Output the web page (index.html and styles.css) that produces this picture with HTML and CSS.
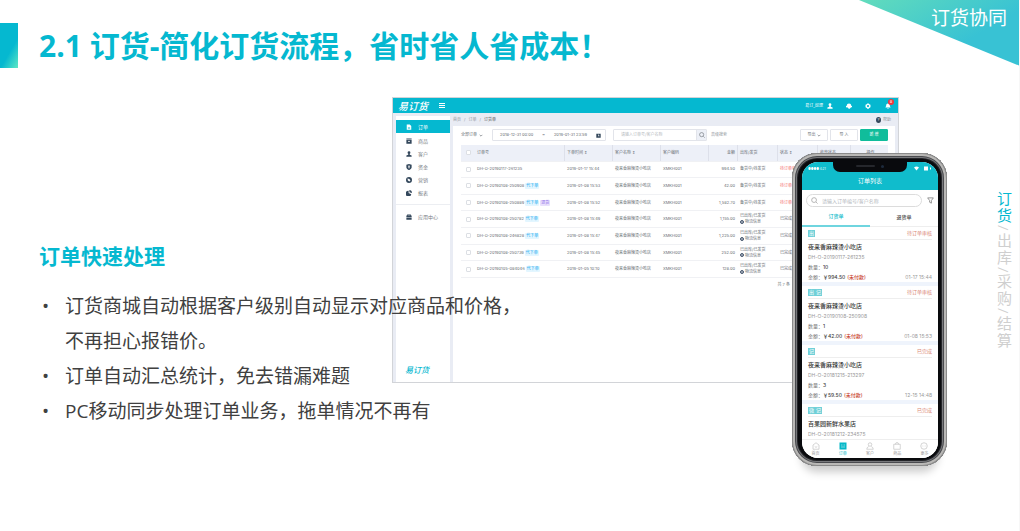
FILE: index.html
```html
<!DOCTYPE html>
<html lang="zh-CN">
<head>
<meta charset="utf-8">
<meta name="viewport" content="width=device-width, initial-scale=1">
<title>订货协同</title>
<link rel="stylesheet" href="styles.css">
</head>
<body>
<svg class="sprite" aria-hidden="true">
  <symbol id="i-user" viewBox="0 0 16 16"><circle cx="8" cy="4.5" r="3.7"/><path d="M6 7h4v3l5 2v3H1v-3l5-2z"/></symbol>
  <symbol id="i-gear" viewBox="0 0 16 16"><path fill-rule="evenodd" d="M6 1h4l1 2 3 1 1 4-1 4-3 1-1 2H6l-1-2-3-1-1-4 1-4 3-1zM8 5a3 3 0 1 0 0 6 3 3 0 0 0 0-6z"/></symbol>
  <symbol id="i-doc" viewBox="0 0 16 16"><path fill-rule="evenodd" d="M2 1h8l4 4v10H2zM5 9v1.500h6V9zM5 12v1h6v-1z"/></symbol>
  <symbol id="i-box" viewBox="0 0 16 16"><path fill-rule="evenodd" d="M1 1h14v3H1zM1 5h14v10H1zM5 7c0 5 6 5 6 0H9.500c0 2.500-3 2.500-3 0z"/></symbol>
  <symbol id="i-shield" viewBox="0 0 16 16"><path fill-rule="evenodd" d="M8 0l7 2v7c0 3-4 6-7 7-3-1-7-4-7-7V2zM5 4l2 3H5v1.500h2V12h2V8.500h2V7H9l2-3H9.500L8 6 6.500 4z"/></symbol>
  <symbol id="i-tag" viewBox="0 0 16 16"><path fill-rule="evenodd" d="M8 0a8 8 0 1 0 0 16A8 8 0 0 0 8 0zM4 4l5 1 3 4-3 3-4-3z"/></symbol>
  <symbol id="i-pie" viewBox="0 0 16 16"><path d="M7 2v6l7 3A7.500 7.500 0 1 1 7 2z"/><path d="M9 0c4 0 7 3 7 8L9 6z"/></symbol>
  <symbol id="i-case" viewBox="0 0 16 16"><path fill-rule="evenodd" d="M3 1h10v3h2v4H1V4h2zM1 9h14v6H1zM5 3v1h6V3z"/></symbol>
  <symbol id="i-search" viewBox="0 0 16 16"><path fill="none" stroke="currentColor" stroke-width="1.600" d="M11.500 11.500L15 15M7 1.500a5.500 5.500 0 1 0 0 11 5.500 5.500 0 0 0 0-11z"/></symbol>
</svg>

<div class="slide">
  <header class="slide-head">
    <span class="accent"></span>
    <h1 class="title">2.1 订货-简化订货流程，省时省人省成本！</h1>
    <div class="corner">订货协同</div>
  </header>

  <main class="stage">
    <section class="copy">
      <h2>订单快速处理</h2>
      <ul>
        <li>订货商城自动根据客户级别自动显示对应商品和价格，<br>不再担心报错价。</li>
        <li>订单自动汇总统计，免去错漏难题</li>
        <li>PC移动同步处理订单业务，拖单情况不再有</li>
      </ul>
    </section>

    <section class="demo">
      <div class="desk">
        <div class="desk-bar">
          <b class="logo">易订货</b>
          <svg class="burger" viewBox="0 0 6 5"><path d="M0 .5h6M0 2.500h6M0 4.500h6"/></svg>
          <span class="who">易订_经理</span>
          <svg class="ic"><use href="#i-user"/></svg>
          <svg class="ic gap" viewBox="0 0 16 16"><path d="M2 7a6 6 0 0 1 12 0l2 1v3h-3v1l-3 3H7l-2-3H3l-3-1V8z"/></svg>
          <svg class="ic gap"><use href="#i-gear"/></svg>
          <span class="bell"><svg class="ic" viewBox="0 0 16 16"><path d="M8 1c4 0 5 3 5 7l2 4H1l2-4c0-4 1-7 5-7zM6 13h4l-2 3z"/></svg><i>8</i></span>
        </div>
        <div class="desk-body">
          <nav class="side">
            <a class="on" href="#"><svg class="ic"><use href="#i-doc"/></svg>订单</a>
            <a href="#"><svg class="ic"><use href="#i-box"/></svg>商品</a>
            <a href="#"><svg class="ic"><use href="#i-user"/></svg>客户</a>
            <a href="#"><svg class="ic"><use href="#i-shield"/></svg>资金</a>
            <a href="#"><svg class="ic"><use href="#i-tag"/></svg>营销</a>
            <a href="#"><svg class="ic"><use href="#i-pie"/></svg>报表</a>
            <hr>
            <a href="#"><svg class="ic"><use href="#i-case"/></svg>应用中心</a>
            <b class="logo small">易订货</b>
          </nav>
          <div class="work">
            <div class="crumbs"><span>首页</span><span>/</span><span>订单</span><span>/</span><span class="here">订货单</span><span class="help"><i>?</i>帮助</span></div>
            <div class="panel">
              <div class="tools">
                <button class="plain">全部订单 <svg class="chev" viewBox="0 0 6 4"><path d="M1 1l2 2 2-2"/></svg></button>
                <div class="dates"><span>2018-12-31 00:00</span><span>~</span><span>2019-01-31 23:59</span><svg viewBox="0 0 16 16"><path fill-rule="evenodd" d="M1 2h14v13H1zM7 5v5h4V8H9V5z"/></svg></div>
                <div class="find"><input aria-label="搜索订单" placeholder="请输入订单号/客户名称"><button aria-label="搜索"><svg><use href="#i-search"/></svg></button></div>
                <a class="adv" href="#">高级搜索</a>
                <button class="btn first">导出 <svg class="chev" viewBox="0 0 6 4"><path d="M1 1l2 2 2-2"/></svg></button>
                <button class="btn">导 入</button>
                <button class="btn add">新 增</button>
              </div>
              <table>
                <colgroup><col class="c-check"><col class="c-no"><col class="c-mid"><col class="c-mid"><col class="c-mid"><col class="c-sum"><col class="c-state"><col class="c-state"><col class="c-pay"><col></colgroup>
                <thead><tr><th><input type="checkbox" aria-label="全选"></th><th>订单号</th><th>下单时间 <em>⇕</em></th><th>客户名称 <em>⇕</em></th><th>客户编码</th><th class="num">金额</th><th>出库/发货</th><th>状态 <em>⇕</em></th><th>收款状态</th><th class="ops">操作</th></tr></thead>
                <tbody>
                  <tr><td><input type="checkbox" aria-label="选择"></td><td>DH-O-20190117-261235</td><td>2019-01-17 15:44</td><td>夜来香麻辣烫小吃店</td><td>XMKH001</td><td class="num">994.50</td><td>备货中/待发货</td><td class="red">待订单审核</td><td></td><td></td></tr>
                  <tr><td><input type="checkbox" aria-label="选择"></td><td>DH-O-20190108-250908<mark>代下单</mark></td><td>2019-01-08 15:53</td><td>夜来香麻辣烫小吃店</td><td>XMKH001</td><td class="num">42.00</td><td>备货中/待发货</td><td class="red">待订单审核</td><td></td><td></td></tr>
                  <tr><td><input type="checkbox" aria-label="选择"></td><td>DH-O-20190108-250889<mark>代下单</mark><mark class="violet">退货</mark></td><td>2019-01-08 15:52</td><td>夜来香麻辣烫小吃店</td><td>XMKH001</td><td class="num">1,582.70</td><td>备货中/待发货</td><td class="red">待订单审核</td><td></td><td></td></tr>
                  <tr><td><input type="checkbox" aria-label="选择"></td><td>DH-O-20190108-250782<mark>代下单</mark></td><td>2019-01-08 15:49</td><td>夜来香麻辣烫小吃店</td><td>XMKH001</td><td class="num">1,155.00</td><td>已出库/已发货<br><i class="dot"></i>物流信息</td><td>已完成</td><td></td><td></td></tr>
                  <tr><td><input type="checkbox" aria-label="选择"></td><td>DH-O-20190108-246828<mark>代下单</mark></td><td>2019-01-08 15:47</td><td>夜来香麻辣烫小吃店</td><td>XMKH001</td><td class="num">1,225.00</td><td>已出库/已发货<br><i class="dot"></i>物流信息</td><td>已完成</td><td></td><td></td></tr>
                  <tr><td><input type="checkbox" aria-label="选择"></td><td>DH-O-20190108-250739<mark>代下单</mark></td><td>2019-01-08 15:45</td><td>夜来香麻辣烫小吃店</td><td>XMKH001</td><td class="num">252.00</td><td>已出库/已发货<br><i class="dot"></i>物流信息</td><td>已完成</td><td></td><td></td></tr>
                  <tr><td><input type="checkbox" aria-label="选择"></td><td>DH-O-20190105-084046<mark>代下单</mark></td><td>2019-01-05 10:10</td><td>夜来香麻辣烫小吃店</td><td>XMKH001</td><td class="num">128.00</td><td>已出库/已发货<br><i class="dot"></i>物流信息</td><td>已完成</td><td></td><td></td></tr>
                </tbody>
              </table>
              <p class="total">共 7 条</p>
            </div>
          </div>
        </div>
      </div>

      <div class="phone">
        <div class="screen">
          <div class="notch"><i></i><b></b></div>
          <div class="p-head">
            <div class="p-status"><span class="sig">●●●● 4:21</span><svg viewBox="0 0 18 5"><path d="M0 1.500q2.500-2 5 0L2.500 4.500z"/><rect x="10" y=".5" width="4" height="4"/><rect x="16" y="1.500" width="1" height="2"/></svg></div>
            <div class="p-title">订单列表</div>
          </div>
          <div class="p-find"><label><svg><use href="#i-search"/></svg><input placeholder="请输入订单编号/客户名称" aria-label="搜索"></label><svg class="funnel" viewBox="0 0 16 16"><path d="M1.500 2h13L10 8v6l-4-2V8z"/></svg></div>
          <div class="p-tabs"><button class="on">订货单</button><button>退货单</button></div>
          <div class="p-list">
            <article><div class="top"><mark>出</mark><span>待订单审核</span></div><h3>夜来香麻辣烫小吃店</h3><p class="id">DH-O-20190117-261235</p><p>数量：<b>10</b></p><p>金额：<b>￥994.50</b> <strong>(未付款)</strong><time>01-17 15:44</time></p></article>
            <article><div class="top"><mark>出</mark><mark>记</mark><span>待订单审核</span></div><h3>夜来香麻辣烫小吃店</h3><p class="id">DH-O-20190108-250908</p><p>数量：<b>1</b></p><p>金额：<b>￥42.00</b> <strong>(未付款)</strong><time>01-08 15:53</time></p></article>
            <article><div class="top"><mark>记</mark><span>已完成</span></div><h3>夜来香麻辣烫小吃店</h3><p class="id">DH-O-20181215-213297</p><p>数量：<b>3</b></p><p>金额：<b>￥59.50</b> <strong>(未付款)</strong><time>12-15 14:48</time></p></article>
            <article><div class="top"><mark>微</mark><mark>记</mark><span>已完成</span></div><h3>百果园新鲜水果店</h3><p class="id">DH-O-20181212-234575</p></article>
          </div>
          <nav class="p-nav">
            <a href="#"><svg viewBox="0 0 16 16"><path d="M2 6l6-4.500L14 6v8.500H2zM5.500 9q2.500 3.500 5 0"/></svg>首页</a>
            <a class="on" href="#"><svg viewBox="0 0 16 16"><path class="fill" d="M1 1h14v14H1z"/><path class="line" d="M4 6h3M4 10h8M9 6h3"/></svg>订单</a>
            <a href="#"><svg viewBox="0 0 16 16"><path d="M8 1.500a3.500 3.500 0 1 0 0 7 3.500 3.500 0 0 0 0-7zM1.500 14.500q0-4 4-5.500M14.500 14.500q0-4-4-5.500M1.500 14.500h13"/></svg>客户</a>
            <a href="#"><svg viewBox="0 0 16 16"><path d="M1.500 4.500h13v10h-13zM5 4.500q0-3.500 3-3.500t3 3.500"/></svg>商品</a>
            <a href="#"><svg viewBox="0 0 16 16"><circle cx="8" cy="8" r="6.500"/><path d="M4.500 8h1M7.500 8h1M10.500 8h1"/></svg>更多</a>
          </nav>
        </div>
      </div>
    </section>

    <nav class="rail"><span class="on">订</span><span class="on">货</span><span>/</span><span>出</span><span>库</span><span>/</span><span>采</span><span>购</span><span>/</span><span>结</span><span>算</span></nav>
  </main>
</div>
</body>
</html>
```

FILE: styles.css
```css
* { box-sizing: border-box; }
body, h1, h2, h3, p, ul { margin: 0; padding: 0; }
body {
  font-family: "Open Sans", "Noto Sans CJK SC", sans-serif;
  color: #404040;
  background: #fff;
}
button, input { font: inherit; color: inherit; margin: 0; padding: 0; border: 0; background: none; }
a { color: inherit; text-decoration: none; }
i, em { font-style: normal; }
svg { display: block; fill: currentColor; flex: none; }
.sprite { display: none; }

.slide { min-height: 100vh; border-right: 1px solid #f7f7f7; overflow: hidden; }
.slide-head { display: flex; height: 97px; align-items: flex-start; margin-right: -1px; }
.accent { width: 18px; height: 45px; margin-top: 23px; background: linear-gradient(120deg, #05b8d0 60%, #5fe8c4); }
.title { margin: 23px 0 0 21px; font-size: 30px; line-height: 45px; font-weight: 700; color: #05b8d0; white-space: nowrap; }
.corner {
  width: 161px; height: 66px; margin-left: auto; padding: 4px 13px 0 0;
  text-align: right; font-size: 19px; line-height: 28px; color: #fff;
  background: linear-gradient(150deg, #62dcbc, #38c2d4 65%);
  clip-path: polygon(0 0, 100% 0, 100% 100%);
}

.stage { display: grid; grid-template-columns: 392fr 507fr 120fr; align-items: start; }
.copy { grid-area: 1 / 1 / 2 / 3; z-index: 1; padding: 144px 0 0 39px; pointer-events: none; }
.copy h2 { font-size: 21px; line-height: 30px; color: #05b8d0; margin-bottom: 18px; }
.copy ul { list-style: none; }
.copy li { position: relative; padding-left: 26px; font-size: 19px; line-height: 35px; white-space: nowrap; }
.copy li::before { content: "•"; position: absolute; left: 3px; }
.demo { grid-area: 1 / 2 / 2 / 3; position: relative; z-index: 0; }

.rail { grid-area: 1 / 3 / 2 / 4; justify-self: end; display: flex; gap: 2px; margin: 94px 6px 0 0; writing-mode: vertical-rl; font-size: 15px; line-height: 18px; color: #cfcfcf; }
.rail .on { color: #05b8d0; }

/* desktop window */
.desk {
  display: flex; flex-direction: column; min-height: 286px;
  border: 1px solid #d2d4d8; background: #e9ecf4;
  font: 4px/6px Inter, "Noto Sans CJK SC", sans-serif; color: #666c72;
}
.desk-bar { display: flex; align-items: center; height: 15px; padding: 0 3px 0 5px; background: #05b8d0; color: #fff; }
.logo { font-size: 10px; line-height: 12px; font-weight: 500; font-style: italic; }
.logo.small { font-size: 8px; color: #05b8d0; margin: auto 0 6px 9px; }
.burger { width: 6px; height: 5px; margin-left: 11px; stroke: #fff; stroke-width: 1; }
.who { margin-left: auto; padding-right: 4px; }
.ic { width: 6px; height: 6px; }
.ic.gap { margin-left: 13px; }
.bell { position: relative; margin: 0 4px 0 14px; }
.bell i { position: absolute; left: 3px; top: -4px; width: 6px; height: 6px; border-radius: 50%; background: #f2353c; text-align: center; }
.desk-body { display: flex; flex: 1; padding: 0 3px 0 3px; }
.side { display: flex; flex-direction: column; width: 54px; margin-top: 3px; padding-top: 4px; background: #fff; font-size: 5px; }
.side a { display: flex; align-items: center; gap: 6px; height: 13px; padding-left: 10px; color: #777e84; }
.side a .ic { color: #33475b; }
.side a.on, .side a.on .ic { color: #fff; }
.side a.on { background: #05b8d0; margin-bottom: 1px; }
.side hr { width: 100%; margin: 5px 0; border: 0; border-top: 1px solid #eceef2; }
.work { flex: 1; display: flex; flex-direction: column; min-width: 0; margin-left: 3px; }
.crumbs { display: flex; align-items: center; gap: 3px; height: 13px; color: #92979d; }
.crumbs .here { color: #555; }
.help { display: flex; gap: 2px; margin: 0 4px 0 auto; }
.help i { width: 5px; border-radius: 50%; background: #33475b; color: #fff; text-align: center; }
.panel { flex: 1; padding: 3px 7px 0 8px; background: #fff; }
.tools { display: flex; align-items: center; height: 12px; margin-bottom: 4px; }
.plain { display: flex; align-items: center; gap: 2px; width: 31px; }
.chev { width: 4px; height: 3px; fill: none; stroke: currentColor; }
.dates { display: flex; align-items: center; justify-content: space-between; width: 114px; height: 12px; padding: 0 2px 0 7px; border: 1px solid #e2e4ea; border-radius: 1px; }
.dates svg { width: 5px; height: 5px; color: #33475b; margin-right: 2px; }
.find { display: flex; width: 94px; height: 12px; margin: 0 4px 0 7px; border: 1px solid #e2e4ea; border-radius: 1px; }
.find input { flex: 1; min-width: 0; padding-left: 7px; }
.find button { width: 10px; background: #edf0f7; border-left: 1px solid #e2e4ea; }
.find button svg { width: 6px; height: 6px; margin: 0 auto; }
input::placeholder { color: #b4b8bd; opacity: 1; }
.adv { color: #92979d; }
.btn { display: flex; align-items: center; justify-content: center; gap: 1px; width: 28px; height: 12px; margin-left: 2px; border: 1px solid #e2e4ea; border-radius: 1px; }
.btn.first { margin-left: auto; }
.btn.add { background: #10bd9b; border-color: #10bd9b; color: #fff; }

table { width: 100%; height: 133px; border-collapse: collapse; table-layout: fixed; }
.c-check { width: 13px; }
.c-no { width: 90px; }
.c-mid { width: 48px; }
.c-sum { width: 29px; }
.c-state { width: 40px; }
.c-pay { width: 33px; }
th, td { height: 16px; padding: 0 0 0 3px; font-weight: 400; text-align: left; white-space: nowrap; border-bottom: 1px solid #f0f1f4; }
th { background: #edf0f8; }
th:nth-child(n+3) { box-shadow: inset 1px 0 #dde0ea; }
.num { text-align: right; padding-right: 2px; }
.ops { text-align: center; }
.red { color: #f4696b; }
td input, th input { appearance: none; display: block; width: 5px; height: 5px; margin-left: 2px; border: 1px solid #dcdfe4; border-radius: 1px; background: #fff; }
td mark { display: inline-block; margin-left: 1px; padding: 0 1px; line-height: 6px; color: #14a9ef; background: #e3f6ff; border-radius: 1px; }
td mark.violet { color: #8d6be8; background: #e8e0fc; }
.dot { display: inline-block; width: 4px; height: 4px; margin-right: 1px; border: 1px solid #46566c; border-radius: 50%; background: #aab3c0; vertical-align: middle; }
.total { margin: 4px 98px 0 0; text-align: right; }

/* phone */
.phone {
  position: absolute; top: 56px; right: -48px; width: 155px; padding: 9px 9px 8px 10px;
  border-radius: 25px; background: #090a0d;
  box-shadow: inset 0 0 0 1px #8a8a8a, inset 0 0 0 3px #b9b8b6, inset 0 0 0 4px #4a4b4f, inset 0 0 0 5px #77787b, inset 0 0 0 6px #242529, 0 15px 9px -9px #ccc;
  font: 5px/10px Inter, "Noto Sans CJK SC", sans-serif; color: #777;
}
.screen { position: relative; display: flex; flex-direction: column; height: 296px; overflow: hidden; border-radius: 16px; background: #fff; }
.notch { position: absolute; z-index: 1; top: 0; left: 31px; right: 31px; height: 10px; display: flex; justify-content: center; gap: 6px; padding-top: 3px; border-radius: 0 0 7px 7px; background: #090a0d; }
.notch i { width: 19px; height: 2px; border-radius: 1px; background: #25272c; }
.notch b { width: 3px; height: 3px; border-radius: 50%; background: #1d2a3c; }
.p-head { height: 28px; flex: none; background: #10bccc; color: #fff; }
.p-status { display: flex; align-items: center; justify-content: space-between; height: 13px; padding: 0 6px; font-size: 3px; }
.p-status svg { width: 18px; height: 5px; }
.p-title { text-align: center; font-size: 6px; line-height: 12px; }
.p-find { display: flex; align-items: center; gap: 5px; padding: 4px 4px 0; flex: none; }
.p-find label { display: flex; align-items: center; gap: 4px; flex: 1; min-width: 0; height: 13px; padding-left: 4px; border: 1px solid #dcdcdc; border-radius: 7px; }
.p-find label svg { width: 7px; height: 7px; color: #999; }
.p-find input { flex: 1; min-width: 0; height: 10px; }
.funnel { width: 7px; height: 7px; fill: none; stroke: #888; stroke-width: 2; }
.p-tabs { display: flex; flex: none; height: 20px; }
.p-tabs button { flex: 1; font-weight: 500; color: #444; border-bottom: 1px solid #eee; }
.p-tabs .on { color: #05b8c8; border-bottom: 2px solid #6fd5df; }
.p-list { flex: 1; overflow: hidden; }
article { height: 59px; padding: 0 6px; border-bottom: 4px solid #eff4fc; }
.top { display: flex; align-items: center; height: 13px; border-bottom: 1px solid #eee; margin-bottom: 1px; }
.top span { margin-left: auto; color: #d98572; }
.top mark { width: 7px; height: 7px; line-height: 7px; text-align: center; background: #6fd0d8; color: #fff; }
h3 { font-size: 6px; line-height: 11px; font-weight: 500; color: #333; }
article p { display: flex; align-items: center; line-height: 10px; }
article .id { color: #999; }
article b { font-weight: 500; color: #444; margin-right: 2px; }
article strong { font-weight: 500; color: #c8442e; }
time { margin-left: auto; color: #999; }
.p-nav { display: flex; flex: none; height: 19px; padding-top: 2px; border-top: 1px solid #eee; background: #fff; }
.p-nav a { flex: 1; display: flex; flex-direction: column; align-items: center; font-size: 4px; line-height: 7px; color: #999; }
.p-nav svg { width: 8px; height: 8px; fill: none; stroke: #aaa; stroke-width: 1; }
.p-nav .on { color: #05b8c8; }
.p-nav .fill { fill: #05b8c8; stroke: none; }
.p-nav .line { stroke: #fff; }
```
